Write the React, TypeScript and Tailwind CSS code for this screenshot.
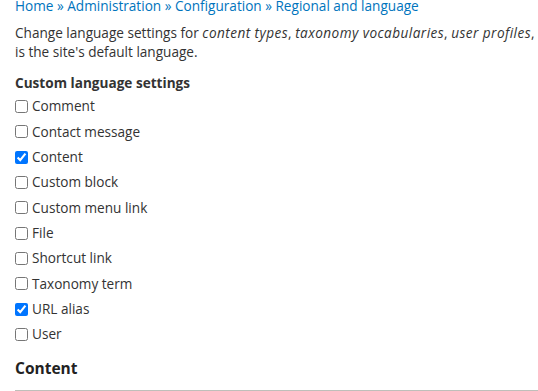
import React from 'react';

const items: [string, boolean][] = [
  ['Comment', false],
  ['Contact message', false],
  ['Content', true],
  ['Custom block', false],
  ['Custom menu link', false],
  ['File', false],
  ['Shortcut link', false],
  ['Taxonomy term', false],
  ['URL alias', true],
  ['User', false],
];

export default function App() {
  return (
    <div className="h-[391px] w-[538px] overflow-hidden bg-white text-[13.6px] text-[#333] font-['Open_Sans',sans-serif]">
      <div className="-mt-[4px] pl-[15px] whitespace-nowrap leading-[19px] text-[#0074bd]">
        <a>Home</a> » <a>Administration</a> » <a>Configuration</a> » <a>Regional and language</a>
      </div>
      <p className="mt-[8px] pl-[15px] leading-[19px] whitespace-nowrap">
        Change language settings for{' '}
        <em className="tracking-[0.45px]">content types</em>,{' '}
        <em className="tracking-[0.45px]">taxonomy vocabularies</em>,{' '}
        <em className="tracking-[0.45px]">user profiles</em>,
        <br />is the site's default language.
      </p>
      <div className="mt-[12px] pl-[15px] font-bold leading-[19px]">Custom language settings</div>
      <div className="mt-[2px] flex flex-col pl-[15px]">
        {items.map(([label, checked]) => (
          <label key={label} className="flex h-[25.3px] items-center gap-[4px]">
            <input type="checkbox" defaultChecked={checked} className="m-0 h-[13px] w-[13px] accent-[#0075ff]" />
            <span>{label}</span>
          </label>
        ))}
      </div>
      <div className="ml-[15px] mt-[12px] border-b border-[#bfbfba] pb-[12px] text-[15.5px] font-bold leading-[19px] text-[#222]">Content</div>
    </div>
  );
}
